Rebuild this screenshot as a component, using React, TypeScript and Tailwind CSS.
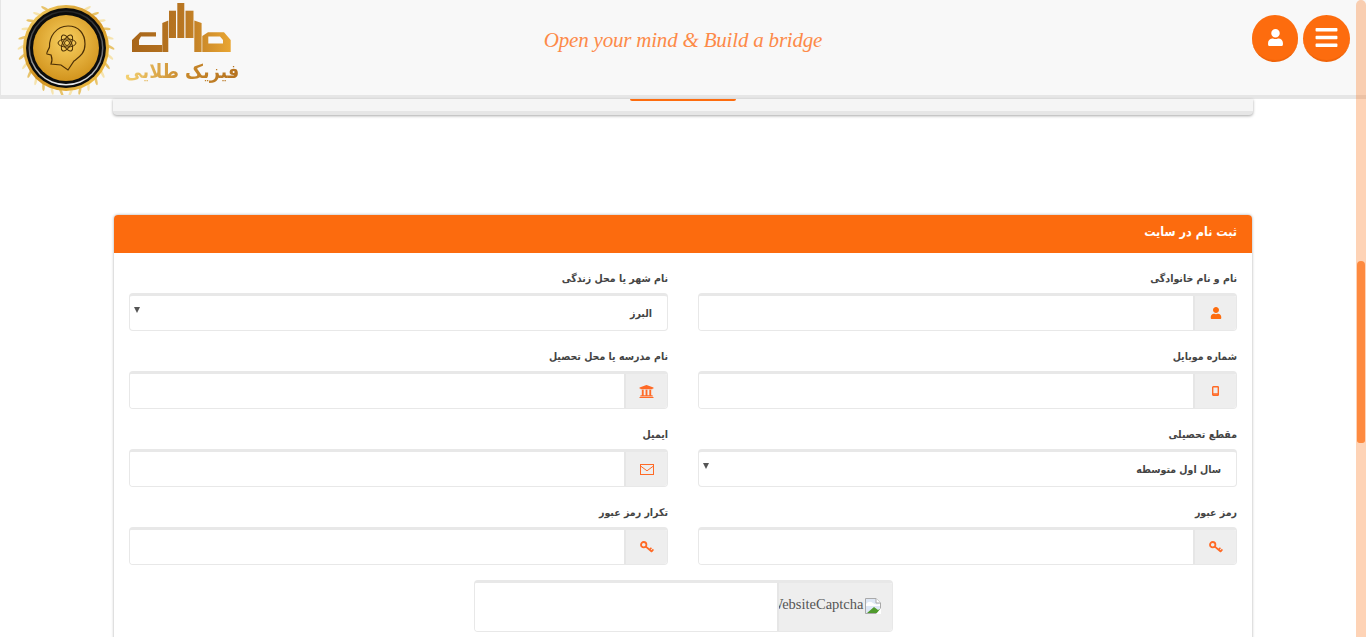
import React from 'react';
import { FaUser, FaBars, FaUniversity } from 'react-icons/fa';

const KeyIcon = () => (
  <svg width="14" height="12" viewBox="0 0 14 12" fill="none" stroke="#ff6a26" strokeWidth="1.8">
    <circle cx="3.7" cy="3.7" r="2.7" />
    <path d="M5.8 5.6 L12 10.8" />
    <path d="M9.600 8.800 L11.400 6.800 M11.600 10.400 L13.400 8.400" strokeWidth="1.6" />
  </svg>
);

const MobileIcon = () => (
  <svg width="7" height="10" viewBox="0 0 7 10" fill="none" stroke="#ff6a26" strokeWidth="1.4">
    <rect x="0.7" y="0.7" width="5.6" height="8.6" rx="0.6" />
    <path d="M0.7 8 H6.3" />
  </svg>
);

const EnvelopeIcon = () => (
  <svg width="14" height="11" viewBox="0 0 14 11" fill="none" stroke="#ff6a26" strokeWidth="1">
    <rect x="0.5" y="0.500" width="13" height="10" />
    <path d="M0.500 2 L7 6.800 L13.500 2" />
  </svg>
);

const BrokenImage = () => (
  <svg width="16" height="16" viewBox="0 0 16 16" className="shrink-0 -mt-[3px]">
    <path d="M0.5 0.5 H11 L15.5 5 V15.5 H0.5 Z" fill="#dfe8f6" stroke="#a9a9a9" />
    <path d="M1 6 Q4 2 8 5 T15 5 V8 H1 Z" fill="#fff" />
    <path d="M2 15 L9 9 L13 12 L15 11 V15 Z" fill="#4f9a2c" />
    <path d="M11 0.5 V5 H15.5" fill="#fff" stroke="#a9a9a9" />
    <path d="M11 16 L16 10 V16 Z" fill="#fff" />
  </svg>
);

const leaves = Array.from({ length: 26 }, (_, i) => -152 + (i * 304) / 25);

const Medal = () => (
  <svg width="100" height="94" viewBox="0 0 100 94" className="shrink-0">
    <defs>
      <linearGradient id="gold" x1="0" y1="0" x2="1" y2="1">
        <stop offset="0" stopColor="#f8d76c" />
        <stop offset="0.5" stopColor="#cf9020" />
        <stop offset="1" stopColor="#f6c94e" />
      </linearGradient>
      <linearGradient id="silver" x1="0" y1="0" x2="0" y2="1">
        <stop offset="0" stopColor="#222" />
        <stop offset="0.6" stopColor="#777" />
        <stop offset="1" stopColor="#eee" />
      </linearGradient>
      <radialGradient id="face" cx="0.5" cy="0.4" r="0.65">
        <stop offset="0" stopColor="#f8d060" />
        <stop offset="1" stopColor="#cf8f18" />
      </radialGradient>
    </defs>
    {leaves.map((a, i) => (
      <ellipse
        key={i}
        cx="50"
        cy="2.500"
        rx="1.300"
        ry="4.500"
        fill={i % 2 ? '#e8c46c' : '#f6e4ae'}
        transform={`rotate(${a + 180} 50 47) rotate(${i < 13 ? 30 : -30} 50 2.500)`}
      />
    ))}
    <circle cx="50" cy="47" r="43" fill="url(#gold)" />
    <circle cx="50" cy="47" r="40" fill="#0c0c0c" />
    <circle cx="50" cy="47" r="37.500" fill="url(#silver)" />
    <circle cx="50" cy="47" r="36" fill="#0c0c0c" />
    <circle cx="50" cy="47" r="33" fill="url(#face)" />
    <path
      d="M35 63 C37 59 36 57 35 54 L31 53 C30 52 33 48 33.500 46 C33 36 40 25 52 25 C63 25 69 33 69 43 C69 53 63 56 58 60 L52 69 L45 64 Z"
      fill="none"
      stroke="#4d3006"
      strokeWidth="1.2"
    />
    <g fill="none" stroke="#4a2f06" strokeWidth="1">
      <ellipse cx="51" cy="42" rx="9" ry="4" />
      <ellipse cx="51" cy="42" rx="9" ry="4" transform="rotate(60 51 42)" />
      <ellipse cx="51" cy="42" rx="9" ry="4" transform="rotate(120 51 42)" />
      <circle cx="51" cy="42" r="2.500" />
    </g>
  </svg>
);

const Logo = () => (
  <div className="flex flex-col items-center self-start w-[114px] ml-[9px] shrink-0">
    <svg width="100" height="50" viewBox="0 0 100 50" className="mt-[3px]">
      <defs>
        <linearGradient id="bar" gradientUnits="userSpaceOnUse" x1="0" y1="0" x2="100" y2="0">
          <stop offset="0" stopColor="#a8661a" />
          <stop offset="0.5" stopColor="#b87622" />
          <stop offset="1" stopColor="#eaa733" />
        </linearGradient>
      </defs>
      <g fill="url(#bar)">
        <path d="M0 49 V37 L8 29.300 H24 V33.600 H9 L7 37 V42 H30 V49 Z" />
        <path d="M30.300 42 V20 L36.300 17.600 V49 H30.300 Z" />
        <rect x="37" y="7.700" width="7" height="27.300" />
        <rect x="45.300" y="0" width="7" height="35" />
        <rect x="53.500" y="7.700" width="8" height="27.300" />
        <path d="M62.300 17.600 L69.600 20 V49 H62.300 Z" />
        <path fillRule="evenodd" d="M70.300 49 V33 L76 29.300 H92 L98.700 37 V49 Z M76.300 33.600 V40.500 H91 V37 L88 33.600 Z" />
      </g>
    </svg>
    <span className="bg-gradient-to-r from-[#f4d272] via-[#c98a2c] to-[#b5721f] bg-clip-text text-transparent font-['DejaVu_Sans_Condensed',sans-serif] font-bold text-[19.5px] leading-[28px] mt-[5px] whitespace-nowrap" dir="rtl">
      فیزیک طلایی
    </span>
  </div>
);

const Field = ({ label, icon, value }: { label: string; icon?: React.ReactNode; value?: string }) => (
  <div>
    <label className="block h-4 mb-2 text-[10.5px] leading-[18px] font-bold text-[#444]">{label}</label>
    {value ? (
      <div className="relative">
        <select
          defaultValue={value}
          className="block w-full h-[38px] appearance-none bg-white border border-[#e8e8e8] border-t-[3px] rounded pr-[15px] pt-[2px] text-[10.5px] font-bold text-[#444] outline-none"
        >
          <option>{value}</option>
        </select>
        <span className="absolute left-[5px] top-[14px] w-0 h-0 border-x-[3px] border-x-transparent border-t-[6px] border-t-[#555]" />
      </div>
    ) : (
      <div className="flex h-[38px] border border-[#e8e8e8] border-t-[3px] rounded overflow-hidden">
        <div className="w-[43px] shrink-0 bg-[#eee] flex items-center justify-center border-l-2 border-l-[#e6e6e6]">{icon}</div>
        <input type="text" className="flex-1 min-w-0 bg-white outline-none" />
      </div>
    )}
  </div>
);

export default function App() {
  return (
    <div className="relative h-[637px] overflow-hidden bg-white font-['DejaVu_Sans_Condensed',sans-serif]">
      <header className="flex items-center h-[99px] bg-[#f8f8f8] border-b-4 border-[#e6e6e6] border-l border-l-[#e6e6e6] pl-[15px] pr-4" dir="ltr">
        <div className="flex-1 flex items-center h-full">
          <Medal />
          <Logo />
        </div>
        <div className="font-['Liberation_Serif',serif] italic text-[21px] text-[#fd8a48] tracking-[-0.2px] whitespace-nowrap -mt-[14px]">
          Open your mind &amp; Build a bridge
        </div>
        <div className="flex-1 flex justify-end gap-[5px] -mt-[18px]">
          <button className="w-[46px] h-[47px] rounded-full bg-[#fd6c0e] border-b-2 border-[#f0640a] flex items-center justify-center text-white text-[17px]">
            <FaUser />
          </button>
          <button className="w-[47px] h-[47px] rounded-full bg-[#fd6c0e] border-b-2 border-[#f0640a] flex items-center justify-center text-white text-[25px]">
            <FaBars />
          </button>
        </div>
      </header>

      <div className="w-[1140px] mx-auto" dir="rtl">
        <div className="h-4 bg-[#f5f5f5] border-b-4 border-[#e6e6e6] rounded-b shadow-[0_1px_3px_rgba(0,0,0,0.35)] flex justify-center">
          <div className="w-[106px] h-[2px] -ml-[1px] bg-[#fd6c0e] rounded-b" />
        </div>

        <section className="mt-[100px] mx-px bg-white rounded shadow-[0_0_3px_rgba(0,0,0,0.35)] pb-10">
          <h2 className="h-[38px] px-[15px] bg-[#fc6b0e] rounded-t text-white text-[12.5px] font-bold leading-[34px]">ثبت نام در سایت</h2>
          <div className="px-[15px] pt-4">
            <div className="grid grid-cols-2 gap-x-[30px] gap-y-4">
              <Field label="نام و نام خانوادگی" icon={<FaUser className="text-[#fd6c0e] text-[12px]" />} />
              <Field label="نام شهر یا محل زندگی" value="البرز" />
              <Field label="شماره موبایل" icon={<MobileIcon />} />
              <Field label="نام مدرسه یا محل تحصیل" icon={<FaUniversity className="text-[#ff6a26] text-[15px]" />} />
              <Field label="مقطع تحصیلی" value="سال اول متوسطه" />
              <Field label="ایمیل" icon={<EnvelopeIcon />} />
              <Field label="رمز عبور" icon={<KeyIcon />} />
              <Field label="تکرار رمز عبور" icon={<KeyIcon />} />
            </div>
            <div className="flex w-[419px] h-[52px] mx-auto mt-[15px] border border-[#e8e8e8] border-t-[3px] rounded overflow-hidden">
              <div className="w-[115px] shrink-0 bg-[#eee] border-l-2 border-l-[#e6e6e6] flex items-center gap-px pr-[11px] overflow-hidden">
                <BrokenImage />
                <span className="font-['Liberation_Serif',serif] text-[14.5px] text-[#555] whitespace-nowrap -mt-[4px]" dir="ltr">WebsiteCaptcha</span>
              </div>
              <input type="text" className="flex-1 min-w-0 bg-white outline-none" />
            </div>
          </div>
        </section>
      </div>

      <div className="absolute top-0 right-0 bottom-0 w-[10px] bg-[#fd6c0e]/30 rounded-t-md">
        <div className="mt-[261px] mx-px h-[182px] bg-[#fe8a3f] rounded-t-md rounded-b-sm" />
      </div>
    </div>
  );
}
